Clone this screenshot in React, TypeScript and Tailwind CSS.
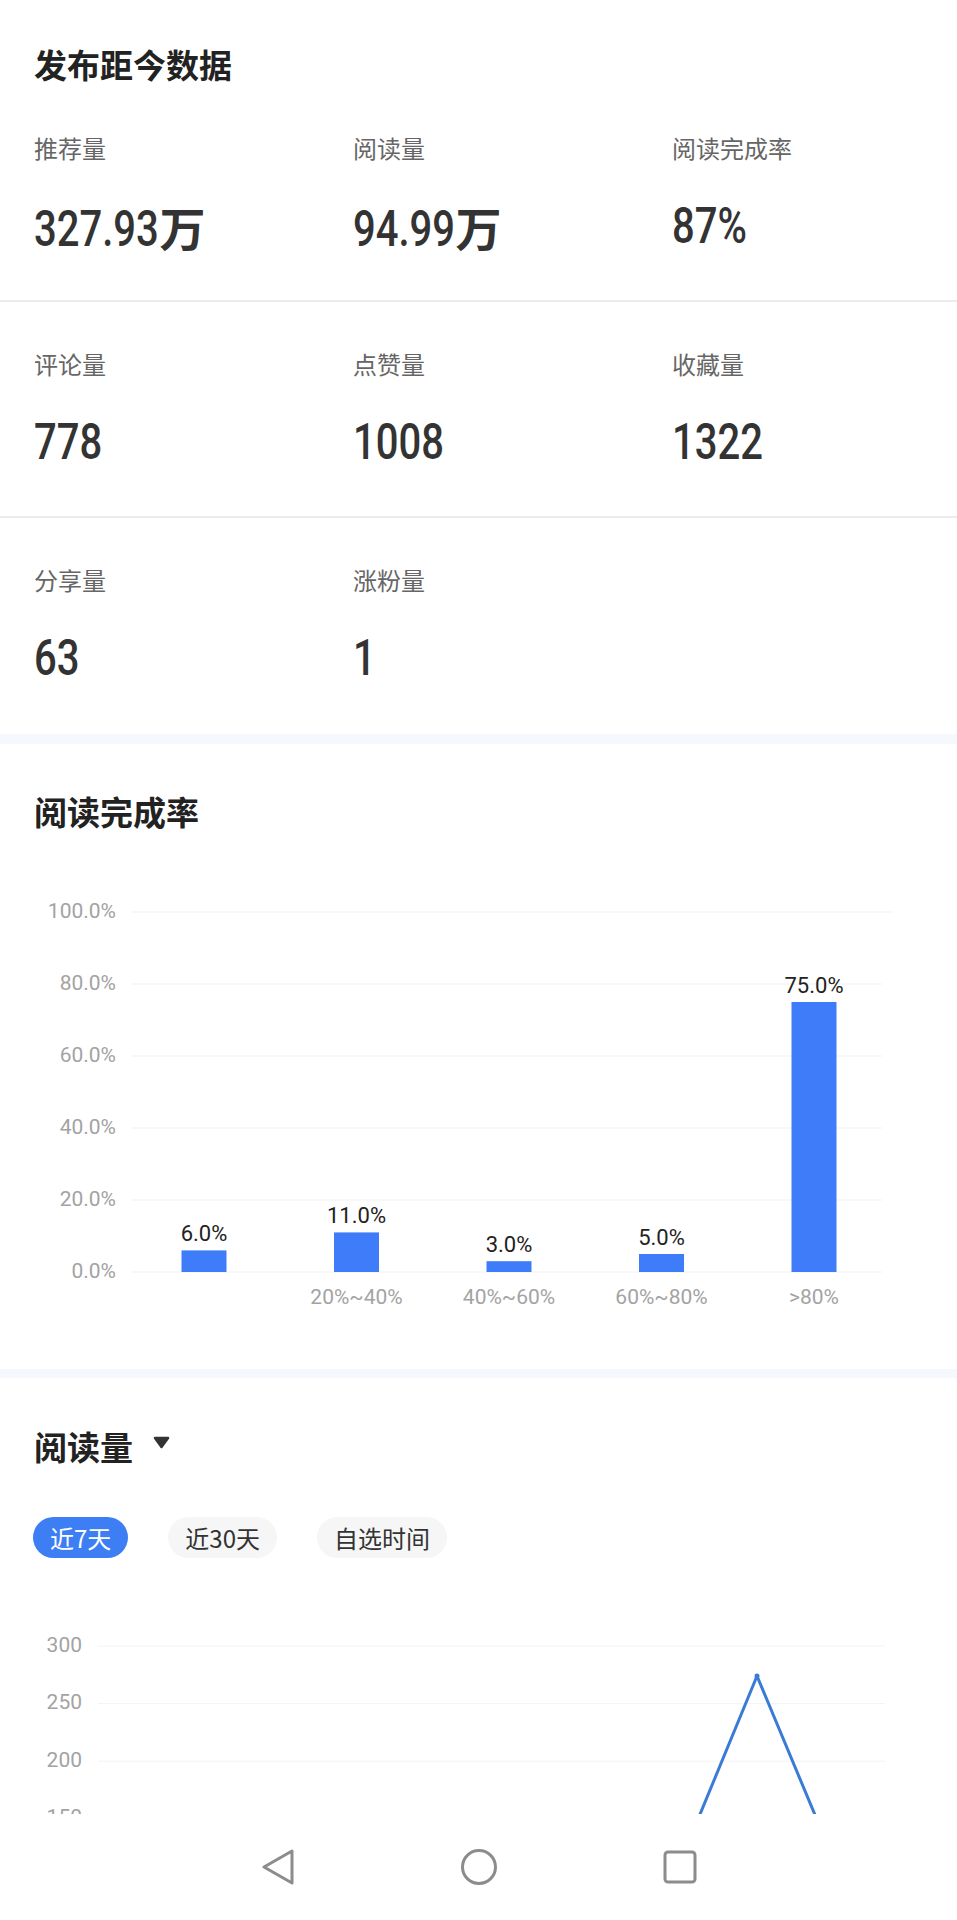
import React from 'react';

const cjk = "font-['Noto_Sans_CJK_SC',sans-serif]";
const num = "font-['Roboto','Noto_Sans_CJK_SC',sans-serif]";

type Stat = { label: string; value: string; unit?: string; pull?: string };

const rows: Stat[][] = [
  [
    { label: '推荐量', value: '327.93', unit: '万', pull: 'mr-[-0.61em]' },
    { label: '阅读量', value: '94.99', unit: '万', pull: 'mr-[-0.5em]' },
    { label: '阅读完成率', value: '87%' },
  ],
  [
    { label: '评论量', value: '778' },
    { label: '点赞量', value: '1008' },
    { label: '收藏量', value: '1322' },
  ],
  [
    { label: '分享量', value: '63' },
    { label: '涨粉量', value: '1' },
  ],
];

const bars = [
  { label: '', value: 6 },
  { label: '20%~40%', value: 11 },
  { label: '40%~60%', value: 3 },
  { label: '60%~80%', value: 5 },
  { label: '>80%', value: 75 },
];

function SectionTitle({ children }: { children: React.ReactNode }) {
  return (
    <h2 className={`${cjk} text-[33px] leading-[40px] font-bold text-[#222] pl-[34px]`}>{children}</h2>
  );
}

function StatCell({ s }: { s: Stat }) {
  return (
    <div className="pl-[34px]">
      <div className={`${cjk} text-[24px] leading-[32px] text-[#666]`}>{s.label}</div>
      <div className="mt-[34px] flex items-baseline h-[56px]">
        <span
          className={`${num} inline-block origin-left scale-x-[0.8] text-[50px] leading-[56px] font-medium text-[#333] ${s.pull ?? ''}`}
        >
          {s.value}
        </span>
        {s.unit && (
          <span className={`${cjk} text-[46px] leading-[56px] font-bold text-[#333]`}>{s.unit}</span>
        )}
      </div>
    </div>
  );
}

function CompletionChart() {
  const grid = [0, 20, 40, 60, 80, 100];
  const base = 441;
  return (
    <svg width="957" height="538" className="block">
      {grid.map((g) => {
        const y = base - g * 3.6;
        return (
          <g key={g}>
            <line x1="131" x2={g === 100 ? 894 : 882} y1={y} y2={y} stroke="#f1f1f1" strokeWidth="1" />
            <text x="116" y={y} textAnchor="end" dominantBaseline="middle" fontFamily="Roboto" fontSize="21" fill="#a3a3a3">
              {g.toFixed(1)}%
            </text>
          </g>
        );
      })}
      {bars.map((b, i) => {
        const cx = 204 + i * 152.5;
        const top = base - b.value * 3.6;
        return (
          <g key={i}>
            <rect x={cx - 22.5} y={top} width="45" height={base - top} fill="#3f7cfa" />
            <text x={cx} y={top - 9} textAnchor="middle" fontFamily="Roboto" fontSize="22" fill="#222">
              {b.value.toFixed(1)}%
            </text>
            {b.label && (
              <text x={cx} y="467" textAnchor="middle" dominantBaseline="middle" fontFamily="Roboto" fontSize="21" fill="#a3a3a3">
                {b.label}
              </text>
            )}
          </g>
        );
      })}
    </svg>
  );
}

function ReadsChart() {
  const ticks = [300, 250, 200, 150];
  return (
    <svg width="957" height="256" className="block overflow-hidden">
      {ticks.map((t, i) => {
        const y = 88 + i * 57.6;
        return (
          <g key={t}>
            <line x1="98" x2="885" y1={y} y2={y} stroke="#f3f3f3" strokeWidth="1" />
            <text x="82" y={y} textAnchor="end" dominantBaseline="middle" fontFamily="Roboto" fontSize="21" fill="#a3a3a3">
              {t}
            </text>
          </g>
        );
      })}
      <polyline
        points="682,300 757,118 833,300"
        fill="none"
        stroke="#3a7bd6"
        strokeWidth="3"
        strokeLinejoin="round"
      />
      <circle cx="757" cy="118" r="2.5" fill="#3a7bd6" />
    </svg>
  );
}

export default function App() {
  return (
    <div className="w-[957px] h-[1920px] overflow-hidden bg-white">
      {/* Data since publish */}
      <section>
        <div className="pt-[44px] pb-[2px]">
          <SectionTitle>发布距今数据</SectionTitle>
        </div>
        {rows.map((row, i) => (
          <div
            key={i}
            className={`grid grid-cols-3 pt-[46px] ${i < rows.length - 1 ? 'h-[216px] border-b-2 border-[#ececec]' : 'h-[216px]'}`}
          >
            {row.map((s) => (
              <StatCell key={s.label} s={s} />
            ))}
          </div>
        ))}
      </section>

      <div className="h-[10px] bg-[#f5f8fc]" />

      {/* Completion rate */}
      <section>
        <div className="pt-[47px]">
          <SectionTitle>阅读完成率</SectionTitle>
        </div>
        <CompletionChart />
      </section>

      <div className="h-[9px] bg-[#f5f8fc]" />

      {/* Reads */}
      <section>
        <div className="pt-[48px] flex items-center">
          <SectionTitle>阅读量</SectionTitle>
          <svg width="17" height="13" viewBox="0 0 17 13" className="ml-[20px] -mt-[8px]">
            <path d="M2 2 L15 2 L8.5 11 Z" fill="#333" stroke="#333" strokeWidth="2.5" strokeLinejoin="round" />
          </svg>
        </div>
        <div className={`${cjk} mt-[51px] pl-[33px] flex gap-[40px] text-[24px]`}>
          <button className="h-[41px] px-[17px] rounded-full bg-[#3d7ef5] text-white">近7天</button>
          <button className="h-[41px] px-[17px] rounded-full bg-[#f6f6f7] text-[#333]">近30天</button>
          <button className="h-[41px] px-[17px] rounded-full bg-[#f6f6f7] text-[#333]">自选时间</button>
        </div>
        <ReadsChart />
      </section>

      {/* System navigation bar */}
      <nav className="h-[106px] bg-white flex items-center justify-center gap-[165px]">
        <svg width="36" height="36" viewBox="0 0 36 36">
          <path d="M4 18 L32 2 L32 34 Z" fill="none" stroke="#8c8c8c" strokeWidth="3" strokeLinejoin="round" />
        </svg>
        <svg width="36" height="36" viewBox="0 0 36 36">
          <circle cx="18" cy="18" r="16.5" fill="none" stroke="#8c8c8c" strokeWidth="3" />
        </svg>
        <svg width="36" height="36" viewBox="0 0 36 36">
          <rect x="3" y="3" width="30" height="30" rx="3" fill="none" stroke="#8c8c8c" strokeWidth="3" />
        </svg>
      </nav>
    </div>
  );
}
